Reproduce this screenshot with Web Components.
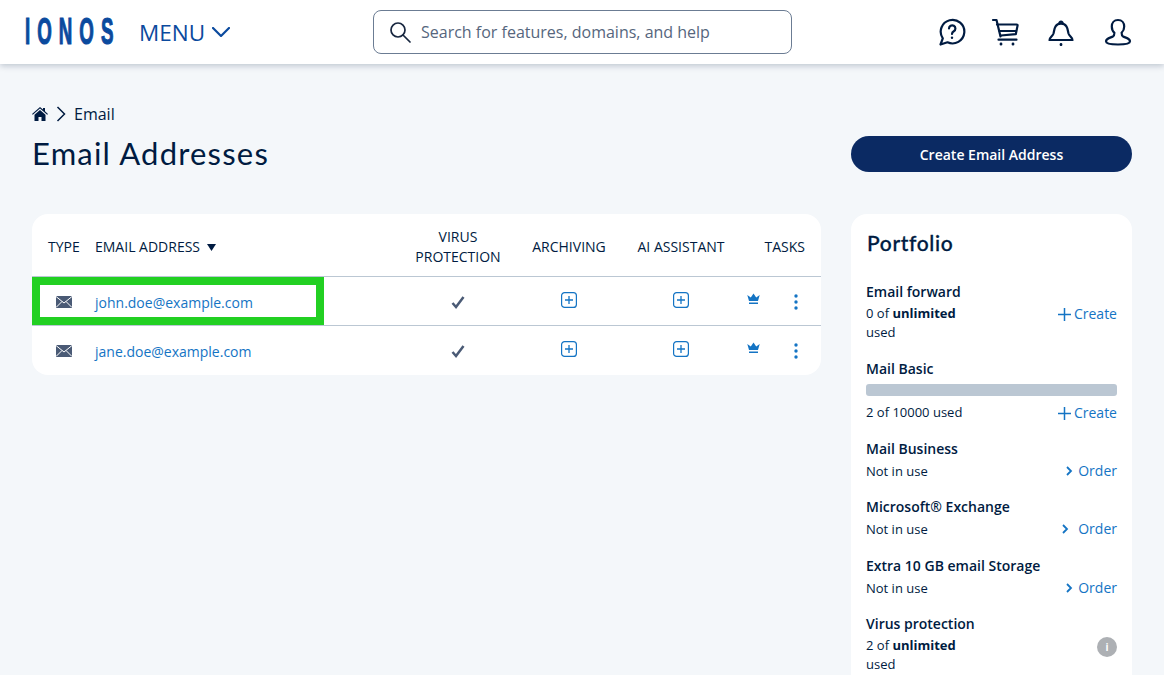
<!DOCTYPE html>
<html lang="en">
<head>
<meta charset="utf-8">
<title>Email Addresses</title>
<style>
  html, body { margin: 0; height: 675px; overflow: hidden; background: #f4f7fa; }
  body { font-family: "Open Sans", sans-serif; color: #001b41; }
  portfolio-item span { display: block; line-height: 19px; }
</style>
</head>
<body>
<ion-header></ion-header>
<ion-page>
  <ion-title-bar slot="top"></ion-title-bar>
  <email-table slot="left">
    <email-row address="john.doe@example.com" highlight></email-row>
    <email-row address="jane.doe@example.com"></email-row>
  </email-table>
  <portfolio-card slot="right">
    <portfolio-item name="Email forward" action="create" loose><span>0 of <b>unlimited</b><br>used</span></portfolio-item>
    <portfolio-item name="Mail Basic" action="create" bar loose>2 of 10000 used</portfolio-item>
    <portfolio-item name="Mail Business" action="order">Not in use</portfolio-item>
    <portfolio-item name="Microsoft® Exchange" action="order" wide loose>Not in use</portfolio-item>
    <portfolio-item name="Extra 10 GB email Storage" action="order">Not in use</portfolio-item>
    <portfolio-item name="Virus protection" action="info"><span>2 of <b>unlimited</b><br>used</span></portfolio-item>
  </portfolio-card>
</ion-page>

<script>
class IonHeader extends HTMLElement {
  connectedCallback() {
    this.attachShadow({ mode: 'open' });
    this.shadowRoot.innerHTML = `
      <style>
        :host { display: flex; align-items: center; height: 64px; background: #fff; box-shadow: 0 2px 6px rgba(0,27,65,0.22); position: relative; padding: 0 32px 0 26px; }
        .logo { width: 88px; height: 36px; overflow: visible; }
        .logo span { display: inline-block; margin-left: -1px; font: bold 36px/36px "Liberation Sans", sans-serif; color: #0b4a9e; -webkit-text-stroke: 1.200px #0b4a9e; letter-spacing: 13.500px; white-space: nowrap; transform: scaleX(.52); transform-origin: left center; }
        .menu { display: flex; align-items: center; gap: 7px; margin-left: 25px; width: 234px; font-size: 22.500px; color: #0b4a9e; }
        .search { display: flex; align-items: center; gap: 10px; box-sizing: border-box; width: 419px; height: 44px; border: 1px solid #6b7c93; border-radius: 8px; padding: 0 15px; font-size: 16px; color: #56667d; background: #fff; }
        .icons { display: flex; align-items: center; margin-left: auto; color: #001b41; }
        svg { display: block; fill: none; stroke: currentColor; stroke-width: 2.200; stroke-linecap: round; stroke-linejoin: round; }
      </style>
      <div class="logo"><span>IONOS</span></div>
      <div class="menu">MENU
        <svg width="18" height="10" viewBox="0 0 18 10"><path d="M1 1l8 8 8-8"/></svg>
      </div>
      <div class="search">
        <svg width="22" height="22" viewBox="0 0 22 22" style="color:#17263f;stroke-width:1.7"><circle cx="9" cy="9" r="7"/><path d="M14 14l7 7"/></svg>
        <span>Search for features, domains, and help</span>
      </div>
      <div class="icons">
        <svg width="28" height="28" viewBox="0 0 28 28"><path d="M2.500 26.500l2.300-6.200A11.800 11.800 0 1 1 9.500 24.300z"/><path d="M11 10.500a3.200 3.200 0 1 1 4.800 2.800c-1.200.7-1.800 1.300-1.800 2.700"/><path d="M14 19.600v.2" stroke-width="2.400"/></svg>
        <svg style="margin-left:25px" width="28" height="28" viewBox="0 0 28 28"><path d="M2 2h3.500l4 16.500"/><path d="M6 6.500h19.500c1 0 1.200.6 1 1.400l-1.700 8.300-15 1.300"/><path d="M8.500 13h16"/><path d="M7.500 21.700h18"/><path d="M10 26v.2M22 26v.2" stroke-width="2.800"/></svg>
        <svg style="margin-left:28px" width="28" height="28" viewBox="0 0 28 28"><path d="M2.500 22h23c.3-2.500-3-3.500-4-6.500-.9-3-.6-9.800-7.500-9.800S7.400 12.500 6.500 15.500c-1 3-4.300 4-4 6.500z"/><path d="M12.200 5.500a1.800 1.800 0 1 1 3.600 0"/><path d="M14 26.500v.2" stroke-width="2.800"/></svg>
        <svg style="margin-left:29px" width="28" height="28" viewBox="0 0 28 28"><path d="M14 2c-4 0-6.200 2.800-6.200 6.500 0 3 1.200 5 2.600 6.300 0 2-.1 2.900-1.500 3.700-2.300 1.200-6.900 2-6.900 4.700 0 2.300 3.500 3.300 12 3.300s12-1 12-3.300c0-2.700-4.600-3.500-6.900-4.700-1.400-.8-1.500-1.700-1.500-3.700 1.400-1.300 2.600-3.300 2.600-6.300C20.200 4.800 18 2 14 2z"/></svg>
      </div>`;
  }
}

class IonPage extends HTMLElement {
  connectedCallback() {
    this.attachShadow({ mode: 'open' });
    this.shadowRoot.innerHTML = `
      <style>
        :host { display: block; padding: 37px 32px 0; }
        .cols { display: grid; grid-template-columns: 789px 281px; column-gap: 30px; align-items: start; margin-top: 40px; }
      </style>
      <slot name="top"></slot>
      <div class="cols"><slot name="left"></slot><slot name="right"></slot></div>`;
  }
}

class IonTitleBar extends HTMLElement {
  connectedCallback() {
    this.attachShadow({ mode: 'open' });
    this.shadowRoot.innerHTML = `
      <style>
        :host { display: grid; grid-template-columns: 789px 281px; column-gap: 30px; color: #001b41; }
        .crumb { display: flex; align-items: center; height: 26px; font-size: 16px; gap: 8px; grid-column: 1 / 3; }
        h1 { margin: 5px 0 0 0; font: 400 31px/42px "Lato", sans-serif; letter-spacing: 1.200px; }
        button { align-self: start; margin-top: 9px; height: 36px; border: 0; border-radius: 18px; background: #0b2a63; color: #fff; font: 600 14px "Open Sans", sans-serif; }
        svg { display: block; }
      </style>
      <div class="crumb">
        <svg width="16" height="14" viewBox="0 0 16 14" fill="#001b41"><path d="M8 0l3 2.600V1h2v3.300L16 7l-.8.8L8 1.600.8 7.800 0 7z"/><path d="M8 3l5.500 4.700V14H9.500v-4h-3v4H2.500V7.700z"/></svg>
        <svg width="10" height="16" viewBox="0 0 10 16" fill="none" stroke="#001b41" stroke-width="1.500"><path d="M1.500 1l7 7-7 7"/></svg>
        <span>Email</span>
      </div>
      <h1>Email Addresses</h1>
      <button>Create Email Address</button>`;
  }
}

class EmailTable extends HTMLElement {
  connectedCallback() {
    this.attachShadow({ mode: 'open' });
    this.shadowRoot.innerHTML = `
      <style>
        :host { display: block; background: #fff; border-radius: 16px; overflow: hidden; color: #001b41; font-size: 14px; }
        .head { display: grid; grid-template-columns: 63px 308px 110px 112px 112px 84px; height: 58px; padding-top: 4px; align-items: center; line-height: 20px; border-bottom: 1px solid #bbc7d3; }
        .head > div { text-align: center; }
        .head .type { text-align: left; padding-left: 16px; }
        .head .mail { text-align: left; display: flex; align-items: center; gap: 7px; }
        .head .tasks { text-align: right; padding-right: 16px; }
        svg { display: block; }
      </style>
      <div class="head">
        <div class="type">TYPE</div>
        <div class="mail">EMAIL ADDRESS <svg width="9" height="7" viewBox="0 0 9 7" fill="#001b41"><path d="M0 0h9L4.500 7z"/></svg></div>
        <div>VIRUS<br>PROTECTION</div>
        <div>ARCHIVING</div>
        <div>AI ASSISTANT</div>
        <div class="tasks">TASKS</div>
      </div>
      <slot></slot>`;
  }
}

class EmailRow extends HTMLElement {
  connectedCallback() {
    const plus = `<svg class="plus" width="16" height="16" viewBox="0 0 16 16" fill="none" stroke="#1474c4" stroke-width="1.200"><rect x=".6" y=".6" width="14.800" height="14.800" rx="3"/><path d="M8 4v8M4 8h8" stroke-width="1.300"/></svg>`;
    this.attachShadow({ mode: 'open' });
    this.shadowRoot.innerHTML = `
      <style>
        :host { display: grid; grid-template-columns: 63px 308px 110px 112px 112px 84px; height: 46px; padding-top: 2px; align-items: center; position: relative; font-size: 14px; border-bottom: 1px solid #bbc7d3; }
        :host(:last-child) { border-bottom: 0; padding-bottom: 1px; }
        a { color: #1474c4; text-decoration: none; }
        .c { display: flex; justify-content: center; }
        .up { transform: translateY(-2px); }
        .tasks { position: relative; height: 100%; }
        .crown { position: absolute; left: 10px; top: 14px; }
        .dots { position: absolute; left: 57px; top: 15px; }
        .mark { position: absolute; left: 0; top: 0; width: 292px; height: 48px; box-sizing: border-box; border: 8px solid #22d022; }
        svg { display: block; }
      </style>
      <div class="c" style="justify-content:flex-start;margin-left:24px"><svg width="16" height="12" viewBox="0 0 16 12"><rect width="16" height="12" fill="#4a5a75"/><path d="M0 .5l8 6.500 8-6.500M0 11.500l6-6M16 11.500l-6-6" fill="none" stroke="#fff" stroke-width="1"/></svg></div>
      <a href="#">${this.getAttribute('address')}</a>
      <div class="c"><svg width="14" height="13" viewBox="0 0 14 13" fill="none" stroke="#4a5a75" stroke-width="2.500"><path d="M1.500 7l3.500 4L12.500 1"/></svg></div>
      <div class="c up">${plus}</div>
      <div class="c up">${plus}</div>
      <div class="tasks">
        <svg class="crown" width="13" height="12" viewBox="0 0 13 12" fill="#1474c4"><path d="M2 8L.3 2 3.800 4.500 6.500.5l2.700 4L12.700 2 11 8z"/><rect x="2" y="9.500" width="9" height="1.500"/></svg>
        <svg class="dots" width="4" height="16" viewBox="0 0 4 16" fill="#1474c4"><circle cx="2" cy="2" r="1.700"/><circle cx="2" cy="8" r="1.700"/><circle cx="2" cy="14" r="1.700"/></svg>
      </div>
      ${this.hasAttribute('highlight') ? '<div class="mark"></div>' : ''}`;
  }
}

class PortfolioCard extends HTMLElement {
  connectedCallback() {
    this.attachShadow({ mode: 'open' });
    this.shadowRoot.innerHTML = `
      <style>
        :host { display: block; background: #fff; border-radius: 16px 16px 0 0; padding: 13px 15px 0; height: 461px; overflow: hidden; box-sizing: border-box; color: #001b41; }
        h2 { margin: 0 0 23px 1px; font: 500 21px/32px "Lato", sans-serif; letter-spacing: .65px; -webkit-text-stroke: .3px #001b41; }
        .list { display: flex; flex-direction: column; gap: 16px; }
      </style>
      <h2>Portfolio</h2>
      <div class="list"><slot></slot></div>`;
  }
}

class PortfolioItem extends HTMLElement {
  connectedCallback() {
    const action = this.getAttribute('action');
    let right = '';
    if (action === 'create') {
      right = `<a href="#" class="create"><svg width="13" height="13" viewBox="0 0 13 13" stroke="#1474c4" stroke-width="1.500"><path d="M6.500 0v13M0 6.500h13"/></svg>Create</a>`;
    } else if (action === 'order') {
      const gap = this.hasAttribute('wide') ? 9 : 5;
      right = `<a href="#" style="gap:${gap}px"><svg width="7" height="10" viewBox="0 0 7 10" fill="none" stroke="#1474c4" stroke-width="1.800"><path d="M1 1l4 4-4 4"/></svg>Order</a>`;
    } else if (action === 'info') {
      right = `<i class="info">i</i>`;
    }
    this.attachShadow({ mode: 'open' });
    this.shadowRoot.innerHTML = `
      <style>
        :host { display: block; font-size: 13px; line-height: 20px; }
        :host([loose]) { margin-bottom: 1px; }
        .name { font-size: 14px; font-weight: 600; line-height: 20px; }
        .bar { height: 12px; border-radius: 3px; background: #bbc7d3; margin: 5px 0 6px; }
        .row { display: flex; justify-content: space-between; align-items: flex-start; margin-top: 2px; }
        .bar + .row { margin-top: 0; }
        .bar + .row a { transform: translateY(1px); }
        a { display: inline-flex; align-items: center; gap: 3px; color: #1474c4; text-decoration: none; font-size: 14px; }
        .info { width: 20px; height: 20px; margin-top: 1px; border-radius: 50%; background: #adb0b4; color: #fff; font-size: 10px; font-style: normal; font-weight: 700; line-height: 20px; text-align: center; }
        svg { display: block; }
      </style>
      <div class="name">${this.getAttribute('name')}</div>
      ${this.hasAttribute('bar') ? '<div class="bar"></div>' : ''}
      <div class="row"><slot></slot>${right}</div>`;
  }
}

customElements.define('ion-header', IonHeader);
customElements.define('ion-page', IonPage);
customElements.define('ion-title-bar', IonTitleBar);
customElements.define('email-table', EmailTable);
customElements.define('email-row', EmailRow);
customElements.define('portfolio-card', PortfolioCard);
customElements.define('portfolio-item', PortfolioItem);
</script>
</body>
</html>
